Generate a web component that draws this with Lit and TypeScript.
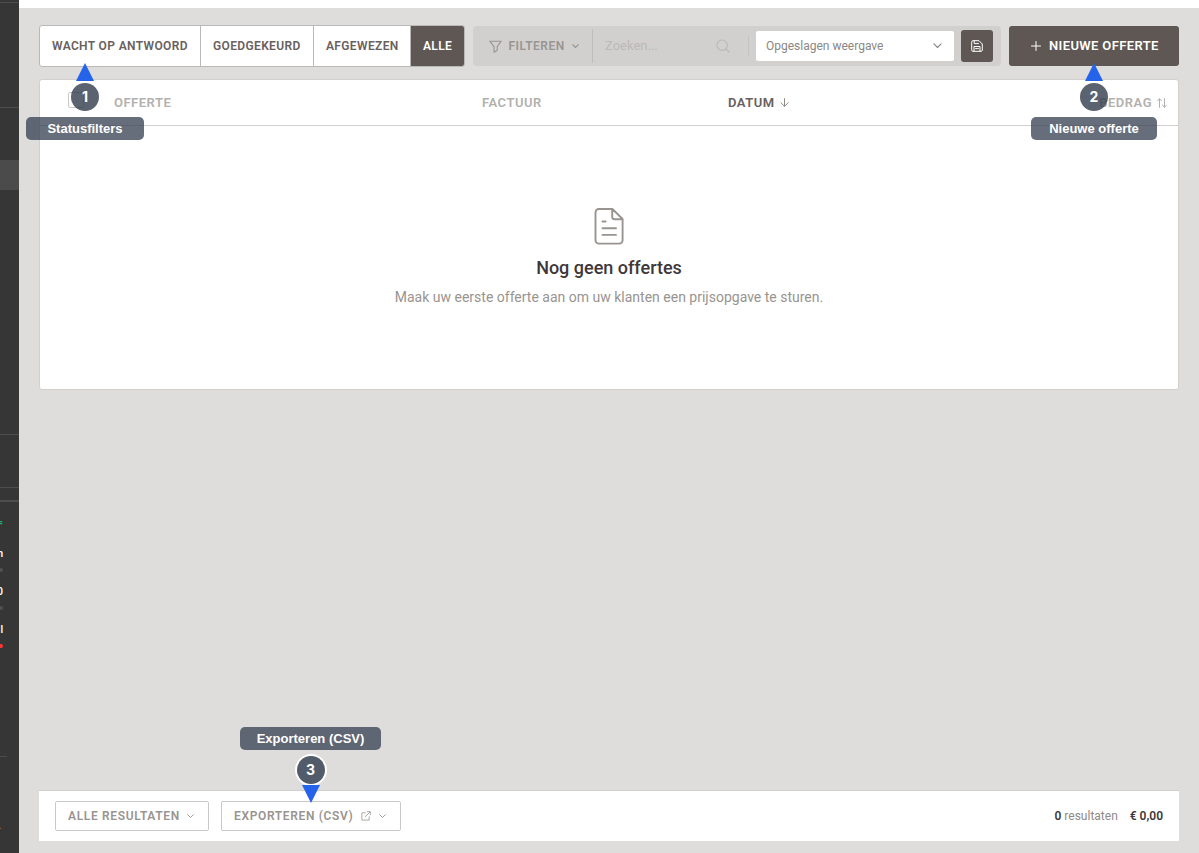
import { LitElement, html, css, svg } from "lit";
import { customElement, property } from "lit/decorators.js";

const icon = (w: number, h: number, box: string, width: number, body: unknown) => html`<svg
  width=${w} height=${h} viewBox=${box} fill="none" stroke="currentColor"
  stroke-width=${width} stroke-linecap="round" stroke-linejoin="round">${body}</svg>`;

const chevron = (w: number, sw = 1) => icon(w, w * 0.6, "0 0 10 6", sw * 10 / w, svg`<path d="M1 1l4 4 4-4"/>`);
const funnel = () => icon(13, 13, "0 0 13 13", 1.1, svg`<path d="M.8 1.2h11.4L8.2 6.6v3.6l-3.2 2V6.6z"/>`);
const search = () => icon(14, 14, "0 0 14 14", 1.1, svg`<circle cx="6.2" cy="6.2" r="5.2"/><path d="M10 10l3.2 3"/>`);
const save = () => icon(12, 12, "0 0 12 12", 1, svg`<path d="M.7 1.8Q.7.7 1.8.7H8L11.3 4v6.2q0 1.1-1.1 1.1H1.8q-1.1 0-1.1-1.1zM3.2.9v2.7h4.3M3 11.2V6.5h6v4.7M4.6 8.6h2.8"/>`);
const plus = () => icon(10, 10, "0 0 10 10", 1, svg`<path d="M5 .5v9M.5 5h9"/>`);
const arrowDown = () => icon(9, 9, "0 0 9 9", 1, svg`<path d="M4.5.6v7.6M.9 4.7l3.6 3.6 3.6-3.6"/>`);
const sort = () => icon(10, 10, "0 0 10 10", 1, svg`<path d="M2.5 9.3V.8M.6 2.8l1.900-2 2 2M7.500.7v8.500M5.500 7.200l2 2 1.900-2"/>`);
const external = () => icon(10, 10, "0 0 10 10", 0.8, svg`<path d="M4.2 1.8H.9v7.3h7.3V5.8M6.2.7h3.1v3.1M9.1.9L4.2 5.8"/>`);
const documentIcon = () => icon(30, 37, "0 0 30 37", 1.9, svg`<path d="M4.4 1h14l10.200 10v21.200a3.400 3.400 0 0 1-3.400 3.400H4.900A3.400 3.400 0 0 1 1.500 32.200V4.400A3.400 3.400 0 0 1 4.900 1zM18.200 1.200v7.500a2.600 2.600 0 0 0 2.600 2.600h7.600M8.500 13.500h3.100M8.500 20.300h13.500M8.500 26.900h13.500"/>`);

@customElement("map-callout")
class MapCallout extends LitElement {
  @property() number = "";
  @property() label = "";
  @property({ type: Boolean, reflect: true }) down = false;
  static styles = css`
    :host { display: flex; flex-direction: column; align-items: center; font-family: "Liberation Sans", Arial, sans-serif; font-weight: 700; color: #fff; }
    :host([down]) { flex-direction: column-reverse; }
    .tip { width: 18px; height: 18px; background: #2563eb; clip-path: polygon(50% 0, 100% 100%, 0 100%); }
    .badge { width: 28px; height: 28px; border-radius: 50%; margin-top: 2px; display: grid; place-items: center; font: 700 14px/16px Inter, sans-serif; background: rgba(55,65,81,.82); }
    .label { width: 100%; height: 23px; margin-top: 6px; border-radius: 5px; display: grid; place-items: center; font-size: 13px; background: rgba(55,65,81,.76); }
    :host([down]) .tip { transform: rotate(180deg); margin-top: -1px; }
    :host([down]) .badge { width: 28px; height: 28px; background: #525b6a; box-shadow: 0 0 0 2px #fff; margin: 6px 0 2px; }
    :host([down]) .label { margin-top: 0; }
  `;
  render() {
    return html`<div class="tip"></div><div class="badge">${this.number}</div><div class="label">${this.label}</div>`;
  }
}

@customElement("side-rail")
class SideRail extends LitElement {
  static styles = css`
    :host { display: flex; flex-direction: column; width: 19px; flex: none; overflow: hidden; background: #363636; color: #fff; font: 600 10px/12px Roboto, sans-serif; }
    .rule { height: 1px; background: #4d4d4d; flex: none; }
    .thick { height: 2px; }
    .short { width: 7px; }
    .top { margin-top: 2px; }
    .g1 { margin-top: 104px; }
    .active { height: 30px; margin-top: 52px; background: #4b4b4b; flex: none; }
    .g2 { margin-top: 244px; }
    .g3 { margin-top: 52px; }
    .g4 { margin-top: 12px; }
    .amount { width: 3px; height: 12px; display: flex; justify-content: flex-end; flex: none; }
    .green { color: #24a878; margin-top: 15px; }
    .first { margin-top: 19px; }
    .next { margin-top: 14px; }
    .meter { width: 3px; height: 4px; border-radius: 0 2px 2px 0; margin-top: 8px; background: #505050; flex: none; }
    .red { background: #ff3434; }
    .g5 { margin-top: 108px; }
    .user { margin-top: 63px; width: 1px; color: #aaa; }
  `;
  render() {
    return html`
      <div class="rule top"></div><div class="rule g1"></div><div class="active"></div>
      <div class="rule g2"></div><div class="rule g3"></div><div class="rule thick g4"></div>
      <div class="amount green">=</div>
      <div class="amount first">n</div><div class="meter"></div>
      <div class="amount next">0</div><div class="meter"></div>
      <div class="amount next">l</div><div class="meter red"></div>
      <div class="rule short g5"></div><div class="amount user">.</div>`;
  }
}

@customElement("app-root")
class AppRoot extends LitElement {
  static styles = css`
    :host { display: flex; position: relative; width: 1199px; height: 853px; overflow: hidden; font: 400 12px/16px Roboto, sans-serif; color: #8f8a86; background: #dedddb; }
    * { box-sizing: border-box; }
    svg { display: block; flex: none; }
    main { flex: 1; min-width: 0; display: flex; flex-direction: column; }
    .strip { height: 8px; background: #fff; flex: none; }
    .content { flex: 1; display: flex; flex-direction: column; padding: 17px 20px 12px; }
    .toolbar { display: flex; height: 42px; align-items: center; }
    .caps { font-weight: 600; letter-spacing: .5px; white-space: nowrap; }
    .tabs { display: flex; width: 426px; height: 42px; border: 1px solid #bbb9b7; border-radius: 3px; background: #fff; color: #69605d; overflow: hidden; }
    .tab { display: flex; align-items: center; padding-left: 12px; border-right: 1px solid #bbb9b7; font-size: 12px; letter-spacing: .36px; }
    .t1 { width: 161px; } .t2 { width: 113px; } .t3 { width: 97px; }
    .t4 { width: 53px; border: 0; background: #5e5753; color: #fff; }
    .filters { display: flex; align-items: center; width: 528px; height: 40px; margin-left: 8px; border-radius: 4px; background: #d1d0ce; color: #999592; }
    .filter { display: flex; align-items: center; height: 34px; width: 120px; padding-left: 16px; border-right: 1px solid #bfbdbc; }
    .filter span { width: 63px; margin-left: 6.5px; }
    .search { display: flex; align-items: center; justify-content: space-between; width: 156px; height: 20px; padding: 0 18px 0 12px; border-right: 1px solid #c5c3c1; font-size: 13px; color: #bbb9b7; }
    .select { display: flex; align-items: center; justify-content: space-between; width: 198px; height: 30px; margin-left: 7px; padding: 0 12px 0 10px; border-radius: 2px; background: #fff; color: #8b8784; }
    .save { display: grid; place-items: center; width: 32px; height: 32px; margin-left: 7px; border-radius: 3px; background: #5e5753; color: #fff; }
    .create { display: flex; align-items: center; width: 170px; height: 40px; margin-left: 8px; padding-left: 22px; gap: 8px; border-radius: 3px; background: #5e5753; color: #fff; font-size: 13px; letter-spacing: .37px; }
    .card { height: 311px; margin-top: 12px; border: 1px solid #d1d0ce; border-radius: 3px; background: #fff; }
    .head { display: flex; align-items: center; height: 46px; border-bottom: 1px solid #d1d0ce; color: #b3b0ad; font-size: 13px; }
    .check { width: 16px; height: 16px; margin: -5px 0 0 28px; border: 1px solid #cbc9c7; border-radius: 2px; }
    .offer { width: 368px; margin-left: 30px; } .invoice { width: 246px; }
    .date { display: flex; align-items: center; gap: 5px; flex: 1; color: #69605d; }
    .date svg { color: #8f8a86; }
    .sum { display: flex; align-items: center; gap: 5px; padding-right: 11px; }
    .empty { display: flex; flex-direction: column; align-items: center; padding-top: 82px; color: #99948f; font-size: 14px; }
    h1 { margin: 11px 0 9px; font: 500 18px/24px Roboto, sans-serif; color: #40373a; }
    footer { display: flex; align-items: center; height: 51px; margin-top: auto; padding: 0 16px; border-top: 1px solid #d1d0ce; background: #fff; }
    .button { display: flex; align-items: center; height: 30px; border: 1px solid #cac8c6; border-radius: 2px; padding-left: 12px; color: #99948f; letter-spacing: .65px; }
    .all { width: 154px; } .all span { width: 119px; }
    .export { width: 180px; margin-left: 12px; } .export span { width: 126.500px; }
    .export svg + svg { margin-left: 8px; }
    .totals { margin-left: auto; display: flex; gap: 12px; white-space: nowrap; }
    b { font-weight: 600; color: #40373a; }
    map-callout { position: absolute; }
    .c1 { left: 26px; top: 63px; width: 118px; }
    .c2 { left: 1031px; top: 63px; width: 126px; }
    .c3 { left: 240px; top: 727px; width: 141px; }
  `;
  render() {
    return html`
      <side-rail></side-rail>
      <main>
        <div class="strip"></div>
        <div class="content">
          <div class="toolbar">
            <div class="tabs caps">
              <div class="tab t1">WACHT OP ANTWOORD</div><div class="tab t2">GOEDGEKEURD</div>
              <div class="tab t3">AFGEWEZEN</div><div class="tab t4">ALLE</div>
            </div>
            <div class="filters">
              <div class="filter caps">${funnel()}<span>FILTEREN</span>${chevron(7, 1.1)}</div>
              <div class="search">Zoeken...${search()}</div>
              <div class="select">Opgeslagen weergave${chevron(9, 1.1)}</div>
              <div class="save">${save()}</div>
            </div>
            <div class="create caps">${plus()}NIEUWE OFFERTE</div>
          </div>
          <section class="card">
            <div class="head caps">
              <div class="check"></div><div class="offer">OFFERTE</div><div class="invoice">FACTUUR</div>
              <div class="date">DATUM${arrowDown()}</div><div class="sum">BEDRAG${sort()}</div>
            </div>
            <div class="empty">${documentIcon()}<h1>Nog geen offertes</h1><div>Maak uw eerste offerte aan om uw klanten een prijsopgave te sturen.</div></div>
          </section>
          <footer>
            <div class="button all caps"><span>ALLE RESULTATEN</span>${chevron(7, .9)}</div>
            <div class="button export caps"><span>EXPORTEREN (CSV)</span>${external()}${chevron(7, .9)}</div>
            <div class="totals"><div><b>0</b> resultaten</div><b>€ 0,00</b></div>
          </footer>
        </div>
      </main>
      <map-callout class="c1" number="1" label="Statusfilters"></map-callout>
      <map-callout class="c2" number="2" label="Nieuwe offerte"></map-callout>
      <map-callout class="c3" number="3" label="Exporteren (CSV)" down></map-callout>`;
  }
}
